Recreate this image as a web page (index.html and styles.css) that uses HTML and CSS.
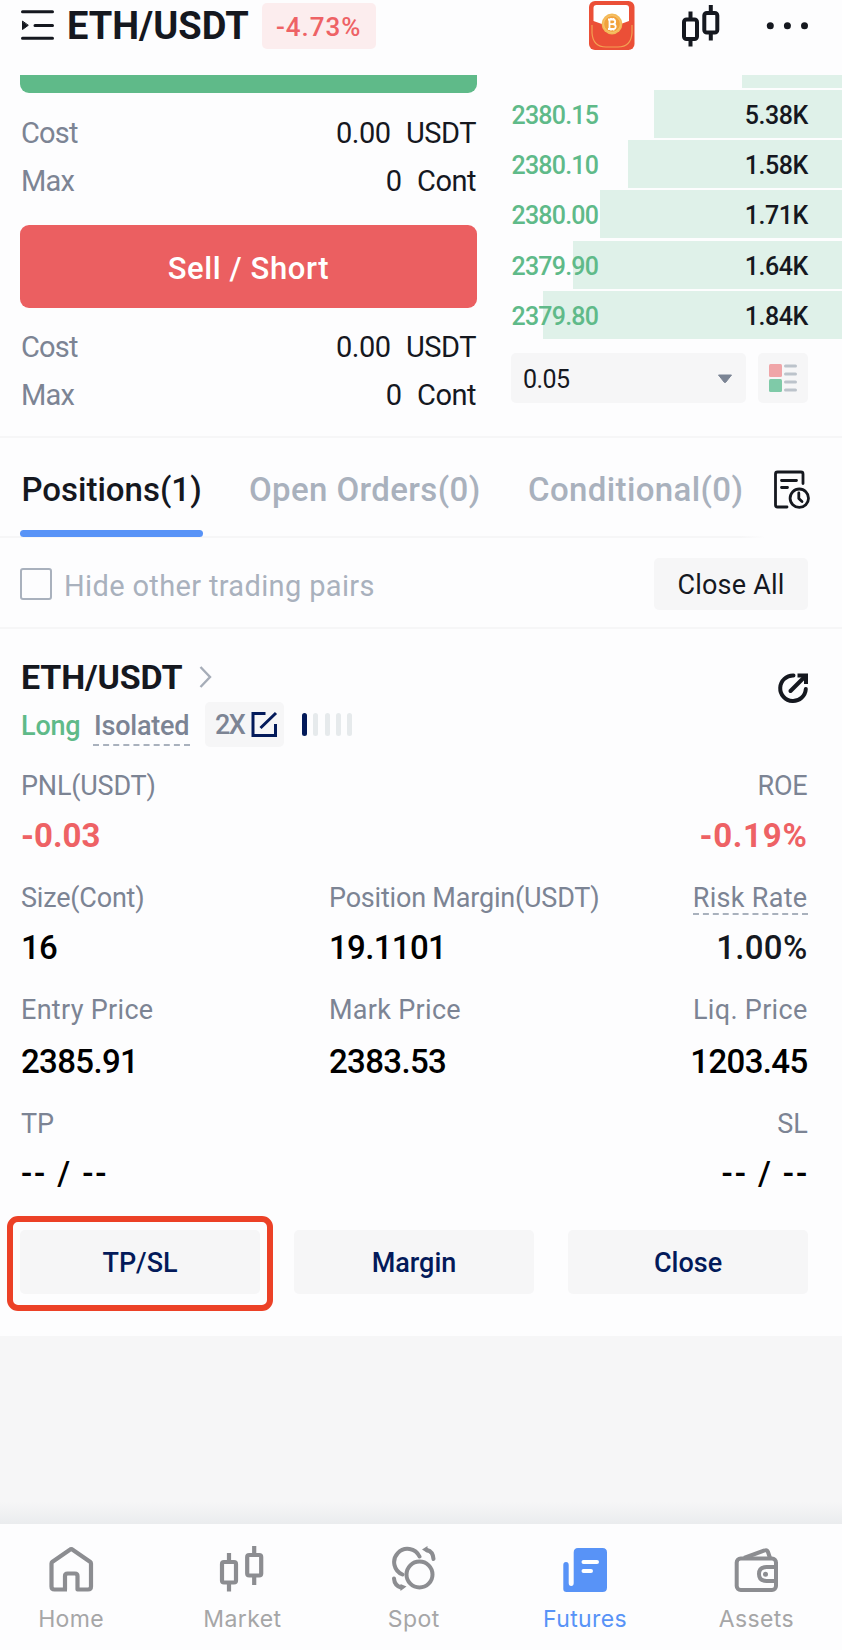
FILE: index.html
```html
<!DOCTYPE html>
<html lang="en">
<head>
<meta charset="utf-8">
<title>ETH/USDT Futures</title>
<link rel="stylesheet" href="styles.css">
</head>
<body>
<div class="app">
  <header class="header">
    <svg class="menu" width="35" height="50" viewBox="20 0 35 50" fill="none" stroke="#15181f" stroke-width="3" stroke-linecap="round"><path d="M22.500 11.700H52.500M35 25.500H52.500M22.500 38.300H52.500"/><path d="M22.500 21.500V29.500L28 25.500Z" fill="#15181f" stroke-width="1"/></svg>
    <h1 class="pair">ETH/USDT</h1>
    <span class="change">-4.73%</span>
    <div class="tools">
      <svg width="46" height="50" viewBox="589 0 46 50">
        <rect x="589" y="1" width="45.500" height="49" rx="6" fill="#eb4f37"/>
        <path d="M593.500 21V8q0-3 3-3h29.500q3 0 3 3v13q-9 4-17.500 5q-9-1-18-5Z" fill="#fff"/>
        <path d="M592 25v8q1 14 14 14h12q13 0 14-14v-8" fill="none" stroke="#f3a052" stroke-width="1.200"/>
        <circle cx="612" cy="24" r="10.400" fill="#f3ba58"/>
        <circle cx="612" cy="24" r="8.300" fill="#f1a23c" stroke="#f8cf83" stroke-width=".6"/>
        <path d="M609.500 19.500v9.500M608 19.500h4.500q2.700 0 2.700 2.300t-2.700 2.300h-3M612.500 24.100q3.200 0 3.200 2.500t-3.200 2.400H608M611 18v1.500M613.500 18v1.500M611 29v1.500M613.500 29v1.500" fill="none" stroke="#fff" stroke-width="1.800"/>
      </svg>
      <svg width="38" height="50" viewBox="682 0 38 50" fill="none" stroke="#15181f" stroke-width="4"><rect x="684" y="19.500" width="13" height="19.500" rx="2.500"/><path d="M690.500 11.500V19M690.500 39v7.500"/><rect x="704.300" y="13" width="13" height="19.500" rx="2.500"/><path d="M710.800 5v8M710.800 33v7.500"/></svg>
      <svg width="42" height="50" viewBox="766 0 42 50" fill="#15181f"><circle cx="770.300" cy="25.800" r="3.500"/><circle cx="787.400" cy="25.800" r="3.500"/><circle cx="804.500" cy="25.800" r="3.500"/></svg>
    </div>
  </header>

  <section class="trade">
    <div class="order">
      <div class="buy"></div>
      <div class="facts">
        <div class="fact"><span class="muted">Cost</span><span class="amount"><span>0.00</span><span>USDT</span></span></div>
        <div class="fact"><span class="muted">Max</span><span class="amount"><span>0</span><span>Cont</span></span></div>
      </div>
      <div class="sell">Sell / Short</div>
      <div class="facts">
        <div class="fact"><span class="muted">Cost</span><span class="amount"><span>0.00</span><span>USDT</span></span></div>
        <div class="fact"><span class="muted">Max</span><span class="amount"><span>0</span><span>Cont</span></span></div>
      </div>
    </div>
    <div class="book">
      <div class="bid first"><i class="depth" style="width:100px"></i></div>
      <div class="bid"><i class="depth" style="width:188.500px"></i><span class="price">2380.15</span><span class="qty">5.38K</span></div>
      <div class="bid"><i class="depth" style="width:214px"></i><span class="price">2380.10</span><span class="qty">1.58K</span></div>
      <div class="bid"><i class="depth" style="width:242.500px"></i><span class="price">2380.00</span><span class="qty">1.71K</span></div>
      <div class="bid"><i class="depth" style="width:269px"></i><span class="price">2379.90</span><span class="qty">1.64K</span></div>
      <div class="bid"><i class="depth" style="width:299px"></i><span class="price">2379.80</span><span class="qty">1.84K</span></div>
      <div class="controls">
        <div class="step"><span>0.05</span><svg width="16" height="10" viewBox="0 0 16 10"><path d="M1.500 1h13L8.800 8.200q-.8.800-1.600 0Z" fill="#7b8494" stroke="#7b8494" stroke-linejoin="round"/></svg></div>
        <div class="view"><svg width="28" height="28" viewBox="0 0 28 28"><rect width="13" height="13" rx="1.500" fill="#f0a5a8"/><rect y="15" width="13" height="13" rx="1.500" fill="#7fcaa8"/><path d="M16.500 2h10M16.500 10h10M16.500 18h10M16.500 26h10" stroke="#bcc3cb" stroke-width="3" stroke-linecap="round"/></svg></div>
      </div>
    </div>
  </section>

  <nav class="tabs">
    <span class="tab active">Positions(1)</span>
    <span class="tab">Open Orders(0)</span>
    <span class="tab">Conditional(0)</span>
    <svg width="38" height="40" viewBox="773 470 38 40" fill="none" stroke="#15181f" stroke-width="2.800" stroke-linecap="round" stroke-linejoin="round"><path d="M803 483.500V474q0-2-2-2H777.500q-2 0-2 2V505q0 2 2 2H787M781.500 480.500H796.500M781.500 487.500H787.500"/><circle cx="799.300" cy="498.200" r="9.200"/><path d="M798.800 493V498.500L802 501.500"/></svg>
  </nav>

  <section class="filter">
    <span class="check"></span>
    <span class="hide">Hide other trading pairs</span>
    <span class="close-all">Close All</span>
  </section>

  <section class="position">
    <div class="top">
      <div class="ident">
        <div class="name"><h2>ETH/USDT</h2><svg width="13" height="22" viewBox="0 0 13 22" fill="none" stroke="#a6adb8" stroke-width="2.400"><path d="M1.500 1L11 11L1.500 21"/></svg></div>
        <div class="tags">
          <span class="long">Long</span>
          <span class="isolated">Isolated</span>
          <span class="lever"><span>2X</span><svg width="27" height="27" viewBox="251 711 27 27" fill="none" stroke="#031a5a" stroke-width="3"><path d="M265.500 713.500H253V735.500H275.500V724M276 713L260.500 728"/></svg></span>
          <span class="risk"><i class="on"></i><i></i><i></i><i></i><i></i></span>
        </div>
      </div>
      <svg class="share" width="32" height="32" viewBox="777 672 32 32" fill="none" stroke="#15181f" stroke-width="4"><path d="M793.500 675.500A12.800 12.800 0 1 0 805.800 689" stroke-linecap="round"/><path d="M790.500 691L804 677.500" stroke-linecap="round"/><path d="M797.500 675.500H806V684" stroke-width="4"/></svg>
    </div>
    <div class="stats">
      <div class="stat"><span class="label">PNL(USDT)</span><strong class="value loss">-0.03</strong></div>
      <div class="stat"></div>
      <div class="stat end"><span class="label">ROE</span><strong class="value loss rate">-0.19%</strong></div>
      <div class="stat"><span class="label">Size(Cont)</span><span class="value">16</span></div>
      <div class="stat"><span class="label">Position Margin(USDT)</span><span class="value">19.1101</span></div>
      <div class="stat end"><span class="label wide dashed">Risk Rate</span><span class="value dark">1.00%</span></div>
      <div class="stat price-row"><span class="label wide">Entry Price</span><span class="value">2385.91</span></div>
      <div class="stat price-row"><span class="label wide">Mark Price</span><span class="value">2383.53</span></div>
      <div class="stat price-row end"><span class="label wide">Liq. Price</span><span class="value">1203.45</span></div>
      <div class="stat"><span class="label">TP</span><span class="value none">-- / --</span></div>
      <div class="stat"></div>
      <div class="stat end"><span class="label">SL</span><span class="value none">-- / --</span></div>
    </div>
    <div class="actions">
      <span class="action marked">TP/SL</span>
      <span class="action">Margin</span>
      <span class="action">Close</span>
    </div>
  </section>

  <div class="rest"></div>

  <footer class="nav">
    <div class="item"><svg width="46" height="46" viewBox="48 1545 46 46" fill="none" stroke="#8c8d91" stroke-width="4.200" stroke-linejoin="round"><path d="M67 1588.500H54.500Q51.500 1588.500 51.500 1585.500V1562.500Q51.500 1561.500 52.500 1560.700L69.500 1549Q71.300 1547.500 73 1549L90 1560.700Q91 1561.500 91 1562.500V1585.500Q91 1588.500 88 1588.500H77.500V1575Q77.500 1572.500 75 1572.500H67.500Q65 1572.500 65 1575V1588.500"/></svg><span>Home</span></div>
    <div class="item"><svg width="46" height="46" viewBox="220 1545 46 46" fill="none" stroke="#8c8d91" stroke-width="4.200"><rect x="223" y="1561" width="14" height="20.500" rx="2"/><path d="M230 1552V1561M230 1582V1590.500"/><rect x="248.200" y="1554" width="14" height="20.500" rx="2"/><path d="M255.200 1545V1554M255.200 1575V1584"/></svg><span>Market</span></div>
    <div class="item"><svg width="46" height="46" viewBox="391 1545 46 46" fill="none" stroke="#8c8d91" stroke-width="4"><circle cx="419.500" cy="1573.500" r="13"/><path d="M402.500 1573.500A13.300 13.300 0 1 1 419.500 1555.500M394 1577.500Q394.500 1584.500 401 1586.500M433.500 1558Q433 1550.500 427 1549" stroke-linecap="round"/><path d="M400.500 1583V1590L406.500 1585.500ZM427.500 1545V1552L422 1548.500Z" fill="#8c8d91" stroke="none"/></svg><span>Spot</span></div>
    <div class="item current"><svg width="46" height="46" viewBox="562 1545 46 46"><path d="M563.300 1564Q563.300 1561 566 1561T568.700 1564V1582Q568.700 1585 571.200 1585T573.700 1582V1551.500Q573.700 1547 578 1547H602.500Q607 1547 607 1551.500V1586.500Q607 1591 602.500 1591H566.500Q563.300 1591 563.300 1588Z" fill="#5893f7"/><path d="M583.500 1561H597M583.500 1570H591" stroke="#fff" stroke-width="4" stroke-linecap="round"/></svg><span>Futures</span></div>
    <div class="item"><svg width="46" height="46" viewBox="733 1545 46 46" fill="none" stroke="#8c8d91" stroke-width="4"><rect x="736.700" y="1557.500" width="39.300" height="31.500" rx="4"/><path d="M744 1557L764.500 1549.500Q767 1548.500 768 1551L770 1557M776 1566H766.500Q759 1566 759 1573T766.500 1580H776"/><circle cx="765.500" cy="1573.300" r="2.500" fill="#8c8d91" stroke="none"/></svg><span>Assets</span></div>
  </footer>
</div>
</body>
</html>
```

FILE: styles.css
```css
*, *::after { box-sizing: border-box; }
body { margin: 0; background: #fff; color: #15181f; font-family: Roboto, "Liberation Sans", sans-serif; }
svg { display: block; flex: none; }
h1, h2 { margin: 0; }
span { white-space: nowrap; }
.app { width: 842px; height: 1650px; background: #fdfdfe; display: flex; flex-direction: column; }

.header { height: 74.500px; padding: 0 34px 0 20px; display: flex; align-items: flex-start; }
.pair { width: 194.500px; margin-left: 12px; font-size: 38px; line-height: 52px; font-weight: 700; white-space: nowrap; }
.change { width: 114.500px; height: 46px; margin-top: 3px; border-radius: 5px; background: #fcedee; color: #ee6265; font-size: 26px; line-height: 48px; font-weight: 500; text-align: center; letter-spacing: 1px; }
.tools { margin-left: auto; display: flex; }
.tools svg + svg { margin-left: 46.500px; }

.trade { height: 361.500px; display: flex; justify-content: space-between; }
.order { width: 457px; margin-left: 20px; }
.buy { height: 18.500px; border-radius: 0 0 9px 9px; background: #5fba89; }
.facts { padding: 15.500px 1px 20.500px; font-size: 29px; font-weight: 400; }
.fact { height: 48px; line-height: 49px; display: flex; justify-content: space-between; }
.muted { color: #7c8494; letter-spacing: -.8px; }
.amount { display: flex; gap: 15.500px; letter-spacing: -.5px; }
.sell { height: 82.500px; border-radius: 9px; background: #eb5f61; color: #fff; font-size: 31px; line-height: 87px; font-weight: 500; text-align: center; letter-spacing: .6px; }

.book { width: 331px; display: flex; flex-direction: column; gap: 2.200px; font-size: 25px; }
.bid { position: relative; height: 48px; padding-right: 34px; line-height: 51px; display: flex; justify-content: space-between; }
.first { height: 13.300px; }
.depth { position: absolute; top: 0; right: 0; height: 100%; background: #dff1e9; }
.price { position: relative; padding-left: .5px; color: #5fba89; font-weight: 500; letter-spacing: -.8px; }
.qty { position: relative; font-weight: 500; letter-spacing: -.4px; }
.controls { display: flex; gap: 12px; margin-top: 12px; }
.step { width: 235px; height: 50px; padding: 3px 13px 0 12px; border-radius: 5px; background: #f6f6f7; display: flex; justify-content: space-between; align-items: center; font-weight: 400; letter-spacing: -.6px; }
.view { width: 50px; height: 50px; padding: 11px; border-radius: 5px; background: #f6f6f7; }

.tabs { height: 102px; padding: 0 31px 0 20px; display: grid; grid-template-columns: 229px 279px 245px auto; border-top: 2px solid #f6f6f7; background: linear-gradient(90deg, #f6f6f7 740px, transparent 765px) 0 100% / 100% 2px no-repeat; font-size: 33px; font-weight: 500; }
.tabs svg { margin-top: 32px; }
.tab { height: 99px; line-height: 104px; color: #a9b1bd; letter-spacing: .38px; }
.active { position: relative; width: 183px; padding-left: 1.500px; color: #15181f; letter-spacing: 0; }
.active::after { content: ""; position: absolute; left: 0; bottom: 0; width: 183px; height: 7px; border-radius: 4px; background: #5893f7; }

.filter { height: 91px; padding: 20px 34px 0 20px; border-bottom: 2px solid #f6f6f7; display: flex; }
.check { width: 32px; height: 32px; margin-top: 10px; border: 2.500px solid #a9b1bd; border-radius: 3px; }
.hide { margin-left: 12px; color: #a9b1bd; font-size: 29px; line-height: 56px; font-weight: 400; letter-spacing: .35px; }
.close-all { width: 154px; height: 52px; margin-left: auto; border-radius: 5px; background: #f6f6f7; font-size: 27px; line-height: 55px; text-align: center; letter-spacing: .2px; }

.position { height: 706.500px; padding: 27px 34px 0 20px; }
.top { display: flex; justify-content: space-between; }
.name { height: 42px; padding-left: 1px; display: flex; align-items: center; gap: 17px; }
.name h2 { font-size: 34px; line-height: 42px; letter-spacing: -.15px; }
.share { margin: 16px -1px 0 0; }
.tags { height: 45px; margin-top: 4px; display: flex; font-size: 27px; line-height: 48px; font-weight: 500; }
.long { width: 73px; padding-left: 1px; color: #5fba89; letter-spacing: -.2px; }
.isolated { width: 97px; height: 44px; padding-left: 1px; color: #7c8494; border-bottom: 2px dashed #a9b1bd; letter-spacing: -.2px; }
.lever { width: 79px; height: 45px; margin-left: 15px; padding: 0 6px 0 10px; border-radius: 5px; background: #f6f6f7; color: #7c8494; display: flex; justify-content: space-between; align-items: center; letter-spacing: -1.500px; }
.risk { margin: 11px 0 0 18px; display: flex; gap: 6.300px; }
.risk i { width: 5px; height: 23px; border-radius: 3px; background: #e6eaec; }
.risk .on { background: #031a5a; }

.stats { margin-top: 18px; padding-left: 1px; display: grid; grid-template-columns: 308px 290px 1fr; grid-template-rows: 112px 112px 114px 112px; }
.stat { display: flex; flex-direction: column; align-items: flex-start; }
.end { align-items: flex-end; padding-right: .5px; }
.label { height: 42px; color: #7c8494; font-size: 27px; line-height: 42px; font-weight: 400; letter-spacing: -.2px; }
.wide { letter-spacing: .3px; }
.dashed { height: 38px; margin-bottom: 4px; border-bottom: 2px dashed #a9b1bd; }
.value { margin-top: 8px; color: #000; font-size: 33px; line-height: 42px; font-weight: 500; letter-spacing: -.65px; }
.price-row .value { margin-top: 9.500px; }
.loss { color: #ee6265; font-weight: 700; letter-spacing: 0; }
.rate { letter-spacing: .7px; }
.dark { color: #15181f; letter-spacing: .3px; }
.none { letter-spacing: 1.900px; }
.end .none { margin-right: -1.500px; }
.actions { display: flex; gap: 34px; margin-top: 14.500px; }
.action { position: relative; width: 240px; height: 64px; border-radius: 5px; background: #f6f6f7; color: #031a5a; font-size: 27px; line-height: 67px; font-weight: 500; text-align: center; }
.marked::after { content: ""; position: absolute; left: -13px; top: -14px; width: 266px; height: 95px; border: 6px solid #ec4127; border-radius: 11px; }

.rest { flex: 1; background: linear-gradient(#f6f6f7 0, #f6f6f7 calc(100% - 22px), #eaecee 100%); }
.nav { height: 126px; padding: 21.500px 0 0; display: grid; grid-template-columns: repeat(5, 171.300px); margin-right: -15px; margin-left: -14.500px; color: #a6a6a7; font-family: Inter, sans-serif; font-size: 23px; }
.item { display: flex; flex-direction: column; align-items: center; }
.item span { margin-top: 13.500px; line-height: 28px; letter-spacing: .4px; }
.current { color: #5893f7; }
```
